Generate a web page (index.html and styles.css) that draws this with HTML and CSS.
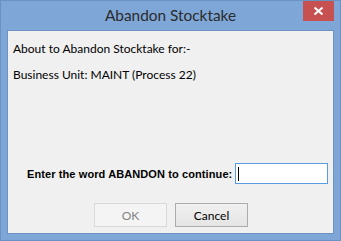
FILE: index.html
```html
<!DOCTYPE html>
<html>
<head>
<meta charset="utf-8">
<link rel="stylesheet" href="styles.css">
</head>
<body>
<div class="window">
  <div class="titlebar">
    <span class="spacer"></span>
    <span class="title">Abandon Stocktake</span>
    <span class="controls">
      <span class="close">
        <svg width="11" height="10" viewBox="0 0 11 10"><path d="M1.5 1.5 L9.5 8.5 M9.5 1.5 L1.5 8.5" stroke="#fff" stroke-width="2"/></svg>
      </span>
    </span>
  </div>
  <div class="client">
    <p class="msg line1">About to Abandon Stocktake for:-</p>
    <p class="msg line2">Business Unit: MAINT (Process 22)</p>
    <div class="confirm">
      <label class="prompt">Enter the word ABANDON to continue:</label>
      <span class="input"><span class="caret"></span></span>
    </div>
    <div class="buttons">
      <span class="btn disabled">OK</span>
      <span class="btn">Cancel</span>
    </div>
  </div>
</div>
</body>
</html>
```
FILE: styles.css
```css
html, body {
  margin: 0;
  padding: 0;
  background: #7ea7d8;
}
.window {
  width: 341px;
  height: 241px;
  box-sizing: border-box;
  border: 1px solid #6a93c4;
  background: #7ea7d8;
  display: flex;
  flex-direction: column;
}
.titlebar {
  height: 29px;
  display: grid;
  grid-template-columns: 1fr auto 1fr;
  align-items: start;
}
.title {
  font-family: "Lato", "Liberation Sans", sans-serif;
  font-size: 15.4px;
  color: #2b2b2b;
  line-height: 29px;
  white-space: nowrap;
}
.controls {
  display: flex;
  justify-content: flex-end;
  padding-right: 6px;
}
.close {
  width: 31px;
  height: 20px;
  background: #c75050;
  display: flex;
  align-items: center;
  justify-content: center;
}
.client {
  flex: 1;
  margin: 0 6px 6px 6px;
  border: 1px solid #6a93c4;
  background: #f0f0f0;
  display: flex;
  flex-direction: column;
  font-family: "Lato", "Liberation Sans", sans-serif;
  font-size: 12px;
  color: #000;
}
.msg {
  margin: 0;
  padding-left: 5px;
  line-height: 15px;
}
.line1 { margin-top: 10px; }
.line2 { margin-top: 11px; }
.confirm {
  margin-top: auto;
  display: flex;
  align-items: center;
  padding-left: 19px;
}
.prompt {
  font-family: "Liberation Sans", Arial, sans-serif;
  font-weight: bold;
  font-size: 11px;
  letter-spacing: 0.1px;
  width: 208px;
}
.input {
  width: 93px;
  height: 21px;
  box-sizing: border-box;
  border: 1px solid #569de5;
  background: #fff;
  display: flex;
  align-items: center;
  padding-left: 2px;
}
.caret {
  width: 1px;
  height: 14px;
  background: #000;
}
.buttons {
  display: flex;
  gap: 8px;
  padding-left: 86px;
  margin-top: 19px;
  margin-bottom: 6px;
}
.btn {
  width: 73px;
  height: 24px;
  box-sizing: border-box;
  border: 1px solid #acacac;
  background: linear-gradient(#f0f0f0, #e5e5e5);
  display: flex;
  align-items: center;
  justify-content: center;
  font-size: 12px;
  color: #000;
}
.btn.disabled {
  border-color: #d9d9d9;
  background: #f4f4f4;
  color: #838383;
}
```
